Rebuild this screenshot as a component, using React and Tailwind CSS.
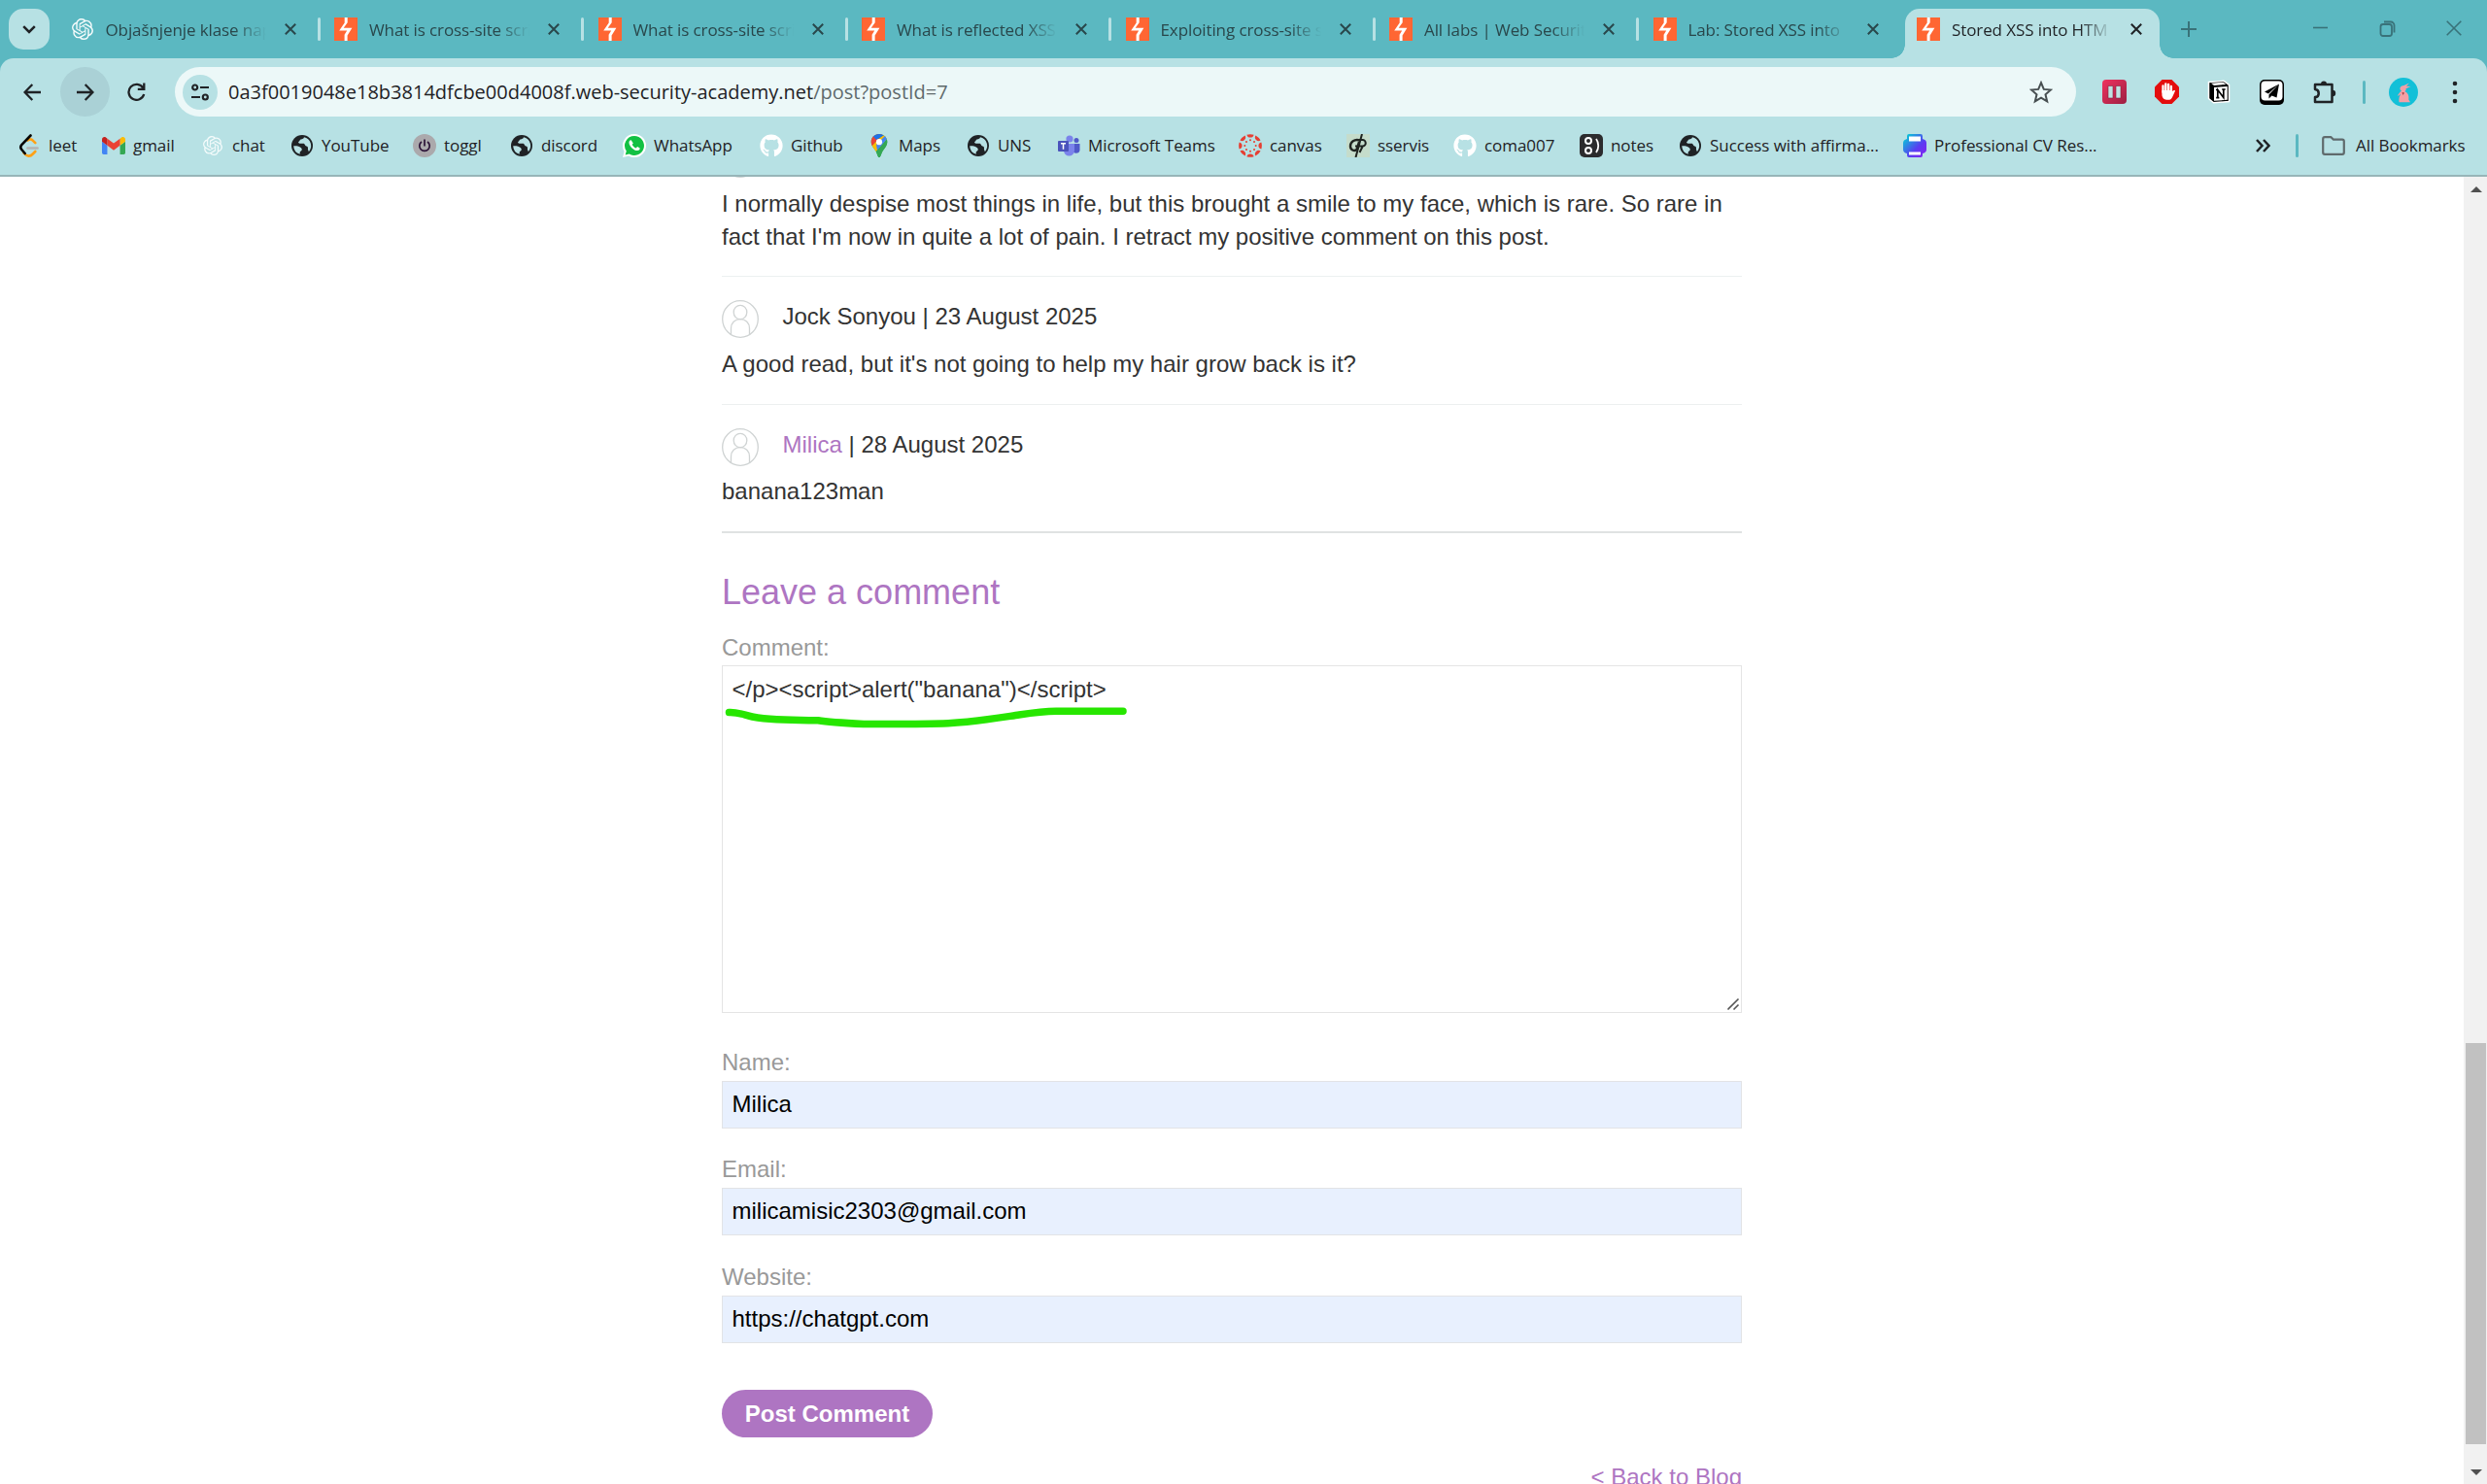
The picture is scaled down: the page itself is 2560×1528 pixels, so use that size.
import React from "react";
import { SiOpenai } from "react-icons/si";
import { FaGithub } from "react-icons/fa";

function Bolt() {
  return (
    <svg viewBox="0 0 24 24" className="h-6 w-6 shrink-0">
      <rect width="24" height="24" fill="#ff6633" />
      <path d="M10.700 0h3v5.200L9.700 10.800h8.700l-4.800 7.700V24h-3v-6.200l2.600-4.300H5.200l5.500-8.100z" fill="#fff" />
    </svg>
  );
}

function Globe() {
  return (
    <svg viewBox="0 0 24 24" className="h-6 w-6">
      <circle cx="12" cy="12" r="11" fill="#1f2225" />
      <path d="M3.200 12.200c3.200-.2 6.400.3 8 2.200 1.200 1.500.3 2.600-.8 3.300-1 .6-.6 1.700-.7 3A9.200 9.200 0 0 1 3.200 12.200z" fill="#b7e1e4" />
      <path d="M14 3.200c-.2 1.600-1.700 2-3.200 2.200-1.400.2-1 1.800-2.200 2.400-1 .6-.3 2 1 2h3.600c1.800 0 1.600 2.600 3.200 2.800 1.600.2 1.800 1.600 1.500 3.200l1 2.400A9.200 9.200 0 0 0 14 3.200z" fill="#b7e1e4" />
    </svg>
  );
}

const icons = {
  leet: (
    <svg viewBox="0 0 24 24" className="h-6 w-6" fill="none" strokeLinecap="round" strokeWidth="2.600">
      <path d="M10.500 14.500h10" stroke="#b3b3b3" />
      <path d="M10.500 6.500c2-1.800 4-1.300 5.800.6l2 2M6.500 19.500c3.500 3.900 6.500 4 9.300 1l2.500-2.500" stroke="#ffa116" />
      <path d="M13.500 1.500L4.500 10.900c-1.500 1.600-1.500 3.600-.2 5.100L7.700 20" stroke="#070706" />
    </svg>
  ),
  gmail: (
    <svg viewBox="52 42 88 66" className="h-6 w-6">
      <path fill="#4285f4" d="M58 108h14V74L52 59v43c0 3.320 2.690 6 6 6" />
      <path fill="#34a853" d="M120 108h14c3.320 0 6-2.690 6-6V59l-20 15" />
      <path fill="#fbbc04" d="M120 48v26l20-15v-8c0-7.420-8.470-11.650-14.400-7.200" />
      <path fill="#ea4335" d="M72 74V48l24 18 24-18v26L96 92" />
      <path fill="#c5221f" d="M52 51v8l20 15V48l-5.600-4.200c-5.940-4.450-14.400-.22-14.400 7.200" />
    </svg>
  ),
  chat: <SiOpenai className="h-5 w-6 text-[#f4fbfb]" />,
  globe: <Globe />,
  toggl: (
    <svg viewBox="0 0 24 24" className="h-6 w-6" fill="none">
      <circle cx="12" cy="12" r="12" fill="#aba9ac" />
      <path d="M12 5.500v7M9 8a5.200 5.200 0 1 0 6 0" stroke="#2c1338" strokeWidth="1.700" />
    </svg>
  ),
  whatsapp: (
    <svg viewBox="0 0 24 24" className="h-6 w-6">
      <path d="M12 0a12 12 0 0 1 0 24c-2 0-4-.5-5.800-1.500L0 24l1.600-6A12 12 0 0 1 12 0z" fill="#fff" />
      <path d="M12 2a10 10 0 1 1-5.300 18.500L2.700 21.500l1.100-3.900A10 10 0 0 1 12 2z" fill="#12c143" />
      <path d="M8.800 6.500c-.8-.6-2.400.7-2.300 2.400.2 3.600 5 8.200 8.600 8.200 1.700 0 3-1.500 2.500-2.500l-2.500-1.500-1.400 1.500c-1.800-.7-3.200-2-4-3.800l1.100-1.300z" fill="#fff" />
    </svg>
  ),
  github: <FaGithub className="h-6 w-6 text-white" />,
  maps: (
    <svg viewBox="0 0 24 24" className="h-6 w-6">
      <clipPath id="pin">
        <path d="M12 0c4.700 0 8.300 3.600 8.300 8.200 0 3.300-1.900 5.600-4 8.200C14.300 19 13.500 24 12 24s-2.200-5-4.300-7.600c-2-2.600-4-4.900-4-8.200C3.700 3.600 7.300 0 12 0z" />
      </clipPath>
      <g clipPath="url(#pin)">
        <rect width="24" height="24" fill="#34a853" />
        <path d="M0 16L17 0h7L8 19z" fill="#fbbc04" />
        <path d="M0 0h16L3 14z" fill="#ea4335" />
        <path d="M6 2.500L9 6 19 0H8z" fill="#1a73e8" />
        <path d="M9 11L20 0v5L10 17z" fill="#4285f4" />
        <path d="M8 19L21 5v19H8z" fill="#34a853" />
      </g>
      <circle cx="12" cy="8.200" r="3.100" fill="#fff" />
    </svg>
  ),
  teams: (
    <svg viewBox="0 0 24 24" className="h-6 w-6">
      <circle cx="20" cy="6.500" r="2.500" fill="#5059c9" />
      <circle cx="13" cy="5" r="3.600" fill="#7b83eb" />
      <path d="M16 10h7.500v6.500a3.800 3.800 0 0 1-7.500 0z" fill="#5059c9" />
      <path d="M7 10h11v7a5.500 5.500 0 0 1-11 0z" fill="#7b83eb" />
      <rect x="1" y="7" width="11" height="11" rx="1" fill="#4b53bc" />
      <path d="M4 9.800h5M6.500 9.800v6" stroke="#fff" strokeWidth="1.500" />
    </svg>
  ),
  canvas: (
    <svg viewBox="-12 -12 24 24" className="h-6 w-6" fill="#e63f33">
      {[0, 45, 90, 135, 180, 225, 270, 315].map((a) => (
        <g key={a} transform={`rotate(${a})`}>
          <path d="M-3.600-11.300a12 12 0 0 1 7.200 0a3.700 3.700 0 0 1-7.200 0z" />
          <circle cx="0" cy="-5.700" r="1" />
        </g>
      ))}
    </svg>
  ),
  sservis: (
    <svg viewBox="0 0 24 24" className="h-6 w-6" fill="none" stroke="#1f2420">
      <rect width="24" height="24" fill="#c5dccb" stroke="none" />
      <path d="M14 6.500C8 4.500 4 8.500 4 12.500s4 5.500 6.500 3.500L13 8" strokeWidth="2.400" />
      <path d="M13 6h3.500a3 3 0 0 1 0 6.500H9M16 0L9.500 24M17 12l-3.500 7" strokeWidth="2" />
    </svg>
  ),
  notes: (
    <svg viewBox="0 0 24 24" className="h-6 w-6" fill="none" stroke="#fff">
      <rect width="24" height="24" rx="5" fill="#2b2b2d" stroke="none" />
      <circle cx="9" cy="7" r="3" strokeWidth="2" />
      <circle cx="9" cy="17" r="3" strokeWidth="2" />
      <path d="M17 5c3 4 3 10 0 14" strokeWidth="1.800" />
    </svg>
  ),
  printer: (
    <svg viewBox="0 0 24 24" className="h-6 w-6">
      <linearGradient id="cv" x1="0" y1="0" x2="1" y2="1">
        <stop offset="0.100" stopColor="#08c5d8" />
        <stop offset="0.600" stopColor="#5a3df2" />
        <stop offset="1" stopColor="#8a1df0" />
      </linearGradient>
      <path d="M6 0h12q2 0 2 2v3q4 1 4 4v7q0 3-4 4v2q0 2-2 2H6q-2 0-2-2v-2q-4-1-4-4V9q0-3 4-4V2q0-2 2-2z" fill="url(#cv)" />
      <path d="M6 2.500h12v5H6zM6 18.500h12v3H6z" fill="#fff" />
    </svg>
  ),
};

const tabs = [
  ["Objašnjenje klase nap", true],
  ["What is cross-site scri"],
  ["What is cross-site scri"],
  ["What is reflected XSS"],
  ["Exploiting cross-site s"],
  ["All labs | Web Securit"],
  ["Lab: Stored XSS into"],
];

const bookmarks = [
  ["leet", "leet", "w-[87px]"],
  ["gmail", "gmail", "w-[102px]"],
  ["chat", "chat", "w-[92px]"],
  ["globe", "YouTube", "w-[126px]"],
  ["toggl", "toggl", "w-[100px]"],
  ["globe", "discord", "w-[116px]"],
  ["whatsapp", "WhatsApp", "w-[141px]"],
  ["github", "Github", "w-[111px]"],
  ["maps", "Maps", "w-[102px]"],
  ["globe", "UNS", "w-[93px]"],
  ["teams", "Microsoft Teams", "w-[187px]"],
  ["canvas", "canvas", "w-[111px]"],
  ["sservis", "sservis", "w-[110px]"],
  ["github", "coma007", "w-[130px]"],
  ["notes", "notes", "w-[102px]"],
  ["globe", "Success with affirma...", "w-[231px]"],
  ["printer", "Professional CV Res...", "w-[240px]"],
];

function Close() {
  return (
    <svg viewBox="0 0 12 12" className="h-3 w-3 shrink-0" fill="none" stroke="currentColor" strokeWidth="2">
      <path d="M.8.8l10.400 10.400M11.200.8L.8 11.200" />
    </svg>
  );
}

function TabTitle({ children }) {
  return (
    <span className="mt-[2px] ml-3 w-[165px] overflow-hidden text-[17px] leading-6 tracking-[-0.100px] whitespace-nowrap [mask-image:linear-gradient(to_right,black_80%,transparent)]">
      {children}
    </span>
  );
}

function TabStrip() {
  return (
    <div className="flex h-[60px] bg-[#5bb8c1] pt-[9px] text-[#29474b]">
      <button className="ml-[9px] flex h-[42px] w-[42px] items-center justify-center rounded-[15px] bg-[#b7e1e4] text-[#1f2225]">
        <svg viewBox="0 0 14 9" className="h-[9px] w-[14px]" fill="none" stroke="currentColor" strokeWidth="2.500">
          <path d="M1.200 1.200L7 7l5.800-5.800" />
        </svg>
      </button>
      <div className="ml-[9.500px] flex">
        {tabs.map(([title, ai], i) => (
          <div key={i} className="flex h-[42px] w-[271.500px] shrink-0 items-center pl-3">
            {ai ? <SiOpenai className="h-[22px] w-6 shrink-0 text-[#f4fbfb]" /> : <Bolt />}
            <TabTitle>{title}</TabTitle>
            <span className="ml-[19px]"><Close /></span>
            <span className={i === 6 ? "hidden" : "ml-[22px] h-6 w-[3px] rounded-sm bg-[#b7e1e4]"} />
          </div>
        ))}
        <div className="relative flex h-[51px] w-[262px] items-center rounded-t-[15px] bg-[#b7e1e4] pb-[9px] pl-3 text-[#1f2225]">
          <span className="absolute bottom-0 -left-[14px] h-[14px] w-[14px] bg-[radial-gradient(circle_at_0_0,#5bb8c1_13.500px,#b7e1e4_14px)]" />
          <span className="absolute -right-[14px] bottom-0 h-[14px] w-[14px] bg-[radial-gradient(circle_at_100%_0,#5bb8c1_13.500px,#b7e1e4_14px)]" />
          <Bolt />
          <TabTitle>Stored XSS into HTM</TabTitle>
          <span className="ml-[19px]"><Close /></span>
        </div>
      </div>
      <svg viewBox="0 0 16 16" className="mt-[13px] ml-[22px] h-4 w-4" stroke="#397279" strokeWidth="2">
        <path d="M8 0v16M0 8h16" />
      </svg>
      <div className="mt-[11px] ml-[119px] flex h-[18px] items-center text-[#397279]">
        <svg viewBox="0 0 16 16" className="h-4 w-4" stroke="currentColor" strokeWidth="1.600"><path d="M1 7.500h15" /></svg>
        <svg viewBox="0 0 17 17" className="ml-[53px] h-[17px] w-[17px]" fill="none" stroke="currentColor" strokeWidth="1.800">
          <rect x="1.500" y="4" width="11.500" height="12" rx="2.500" />
          <path d="M5 1.500h7a3.500 3.500 0 0 1 3.500 3.500v7.500" />
        </svg>
        <svg viewBox="0 0 16 16" className="ml-[52px] h-4 w-4" stroke="currentColor" strokeWidth="1.600"><path d="M.7.7l14.600 14.600M15.300.7L.7 15.300" /></svg>
      </div>
    </div>
  );
}

function Extensions() {
  return (
    <div className="ml-[27px] flex shrink-0 items-center">
      <svg viewBox="0 0 25 25" className="h-[25px] w-[25px]">
        <linearGradient id="pk" x1="0" y1="0" x2="1" y2="1"><stop stopColor="#f0325f" /><stop offset="1" stopColor="#9c1f42" /></linearGradient>
        <rect width="25" height="25" rx="4" fill="url(#pk)" />
        <path d="M6 6.500h5v12.500H6zM14 6.500h5v12.500h-5z" fill="#bfe3e2" stroke="#8a1c3a" strokeWidth=".6" />
      </svg>
      <svg viewBox="0 0 25 25" className="ml-[29px] h-[25px] w-[25px]">
        <path d="M7.500 0h10L25 7.500v10L17.500 25h-10L0 17.500v-10z" fill="#e40d0d" />
        <path d="M8.500 13V6.500M11.300 12V4.500M14.100 12V5M16.900 13V7" stroke="#fff" strokeWidth="2.300" strokeLinecap="round" />
        <path d="M7.400 11h10.700v1l2-1.200 1 .7-3 6.500c-1 2-2 2.800-4.500 2.800-4 0-6.200-1.800-6.200-5.800z" fill="#fff" />
      </svg>
      <svg viewBox="0 0 24 24" className="ml-[29px] h-[25px] w-6">
        <path d="M1.500 2L17 .8l5.500 4V22L6.500 23.300 1.500 19z" fill="#000" stroke="#fff" strokeWidth="1.500" />
        <path d="M7 7.500L20.700 6.500v13.800l-13.700 1z" fill="#fff" />
        <path d="M4 3.200L16.500 2.200l2.700 2.200L7 5.400z" fill="#fff" />
        <path d="M10.800 18V10l6 8V9.500M9 10h2.700M15.200 9.500h3.500M9.200 18.200h3.200" fill="none" stroke="#000" strokeWidth="1.700" />
      </svg>
      <svg viewBox="0 0 25 26" className="ml-[30px] h-[26px] w-[25px]">
        <rect width="25" height="26" rx="5" fill="#000" />
        <rect x="1.500" y="1.500" width="22" height="20" rx="4" fill="#fff" />
        <path d="M20 4.500L5 12.500l4 2zM20 4.500L9.500 15.500v4l3-3 5 2z" fill="#000" />
      </svg>
      <svg viewBox="0 0 26 26" className="ml-[29px] h-[26px] w-[26px]">
        <path d="M3 5h17.500v18H3v-4.900c5-.5 5-7.400 0-8z" fill="none" stroke="#1f2225" strokeWidth="2.500" strokeLinejoin="round" />
        <path d="M9 4.500a3 3 0 0 1 6 0zM21 10.800a3.200 3.200 0 0 1 0 6.400z" fill="#1f2225" />
      </svg>
      <span className="ml-[26px] h-6 w-[2.500px] rounded bg-[#5bb8c1]" />
      <svg viewBox="0 0 30 30" className="ml-[24.500px] h-[30px] w-[30px]">
        <circle cx="15" cy="15" r="15" fill="#12c0d8" />
        <path d="M11.500 10.500c1-1.800 2.500-2.500 4-2.500l5.500-2.500-3 3.300 4.500.2-5 2.200c.5 1.300-.2 2.300-1.200 2.800 3.500 1.500 4.700 5 4 8.500l1.700 2.700H10.500c-.5-4 .3-6.500 2-8.500l-3.500 2.300c.5-2 2-4 4-5.300-1-.7-1.700-1.700-1.500-3.200z" fill="#f2a0a6" />
        <path d="M13.500 15l2.500.5-1.500 2.500z" fill="#a33c3c" />
      </svg>
      <svg viewBox="0 0 6 24" className="ml-[35px] h-6 w-[6px]" fill="#1f2225">
        <circle cx="3" cy="3" r="2.300" /><circle cx="3" cy="12" r="2.300" /><circle cx="3" cy="21" r="2.300" />
      </svg>
    </div>
  );
}

function Toolbar() {
  return (
    <div className="flex h-[69px] items-center pt-[9px] pb-[9px] text-[#1f2225]">
      <svg viewBox="0 0 18 18" className="ml-6 h-[18px] w-[18px]" fill="none" stroke="currentColor" strokeWidth="2.300">
        <path d="M18 9H1.500M9.300 1L1.500 9l7.800 8" />
      </svg>
      <span className="ml-5 flex h-[51px] w-[51px] items-center justify-center rounded-full bg-[#aad1d6]">
        <svg viewBox="0 0 18 18" className="h-[18px] w-[18px]" fill="none" stroke="currentColor" strokeWidth="2.300">
          <path d="M0 9h16.500M8.700 1l7.800 8-7.800 8" />
        </svg>
      </span>
      <svg viewBox="0 0 19 19" className="ml-[18px] h-[19px] w-[19px]" fill="none" stroke="currentColor" strokeWidth="2.300">
        <path d="M16.300 5.600A8 8 0 1 0 17.200 12M17.300.5v6.300h-6.500" />
      </svg>
      <div className="ml-[30px] flex h-[51px] w-[1957px] shrink-0 items-center rounded-full bg-[#ecf8f8] pl-2">
        <span className="flex h-[36px] w-[36px] items-center justify-center rounded-full bg-[#b7e1e4]">
          <svg viewBox="0 0 18 18" className="h-[18px] w-[18px]" fill="none" stroke="currentColor" strokeWidth="2.200">
            <circle cx="3.700" cy="4" r="2.500" /><path d="M9 4h9M0 14h9" /><circle cx="14.300" cy="14" r="2.500" />
          </svg>
        </span>
        <span className="ml-[11px] flex-1 text-[20px] leading-7 whitespace-nowrap">
          0a3f0019048e18b3814dfcbe00d4008f.web-security-academy.net<span className="text-[#5f6a6c]">/post?postId=7</span>
        </span>
        <svg viewBox="0 0 24 24" className="mr-[24px] h-6 w-6" fill="none" stroke="#474f51" strokeWidth="2">
          <path d="M12 2.200l2.800 6.700 7.200.6-5.500 4.800 1.700 7.100-6.200-3.800-6.200 3.800 1.700-7.100L2 9.500l7.200-.6z" />
        </svg>
      </div>
      <Extensions />
    </div>
  );
}

function Bookmarks() {
  return (
    <div className="flex h-[51px] items-center pb-[9px] pl-[18px] text-[17px] leading-6 tracking-[-0.060px] whitespace-nowrap text-[#1f2225]">
      {bookmarks.map(([icon, label, width], i) => (
        <div key={i} className={`flex shrink-0 items-center ${width}`}>
          <span className="mr-[8px] w-6 shrink-0">{icons[icon]}</span>
          {label}
        </div>
      ))}
      <div className="ml-[123px] flex items-center">
        <svg viewBox="0 0 15 14" className="h-[14px] w-[15px]" fill="none" stroke="currentColor" strokeWidth="2.500">
          <path d="M1 1l5.500 6L1 13M8 1l5.500 6L8 13" />
        </svg>
        <span className="ml-[26px] h-6 w-[3px] rounded bg-[#5bb8c1]" />
        <svg viewBox="0 0 24 20" className="ml-[24px] h-5 w-6" fill="none" stroke="#5f6a6c" strokeWidth="2.200" strokeLinejoin="round">
          <path d="M1.200 3q0-1.800 1.800-1.800h6.500l2.500 2.500h9q1.800 0 1.800 1.800V17q0 1.800-1.800 1.800H3q-1.800 0-1.800-1.800z" />
        </svg>
        <span className="ml-[11px]">All Bookmarks</span>
      </div>
    </div>
  );
}

function Avatar() {
  return (
    <svg viewBox="0 0 38 39" className="h-[39px] w-[38px] shrink-0" fill="none" stroke="#cfd3d3" strokeWidth="1.300">
      <ellipse cx="19" cy="19.500" rx="18.300" ry="18.800" />
      <ellipse cx="19" cy="12.500" rx="6.800" ry="7.200" />
      <path d="M9.500 35.500V29c0-5.500 4-9.300 9.500-9.300s9.500 3.800 9.500 9.300v6.500" />
    </svg>
  );
}

function Field({ label, value, className }) {
  return (
    <label className={`block ${className}`}>
      <span className="block h-[34px] text-[#999]">{label}</span>
      <span className="mt-[2px] block h-[49px] border border-[#e2e3e6] bg-[#e8f0fe] pt-[6px] pl-[9.500px] text-black">{value}</span>
    </label>
  );
}

function Page() {
  return (
    <main className="flex h-[1346px] overflow-hidden bg-white">
      <div className="flex-1 overflow-hidden">
        <div className="ml-[743px] w-[1050px] font-['Liberation_Sans',Arial,sans-serif] text-[24px] leading-[34px] text-[#333]">
          <div className="-mt-[38px] h-[39px]"><Avatar /></div>
          <p className="mt-[10px] h-[92px] border-b border-[#ecf0f0]">
            I normally despise most things in life, but this brought a smile to my face, which is rare. So rare in fact that I'm now in quite a lot of pain. I retract my positive comment on this post.
          </p>
          <section className="h-[132px] border-b border-[#ecf0f0] pt-6">
            <div className="flex h-[39px]"><Avatar /><span className="ml-[24.500px]">Jock Sonyou | 23 August 2025</span></div>
            <p className="mt-[10px]">A good read, but it's not going to help my hair grow back is it?</p>
          </section>
          <section className="h-[132px] border-b-2 border-[#e0e2e2] pt-6">
            <div className="flex h-[39px]"><Avatar /><span className="ml-[24.500px]"><span className="text-[#ae75c2]">Milica</span> | 28 August 2025</span></div>
            <p className="mt-[9px]">banana123man</p>
          </section>
          <h1 className="mt-[40px] h-[61px] text-[36px] leading-[42px] text-[#ae75c2]">Leave a comment</h1>
          <div className="h-[34px] text-[#999]">Comment:</div>
          <div className="relative mt-px h-[358px] border border-[#e4e4e4] pt-[7px] pl-[9.500px]">
            {'</p><script>alert("banana")</script>'}
            <svg viewBox="0 0 420 30" className="absolute top-[40px] left-[1px] h-[30px] w-[420px]" fill="none" stroke="#27e600" strokeWidth="7.500" strokeLinecap="round" strokeLinejoin="round">
              <path d="M5.500 7.500C17 7 23 11.500 35 13C52 15 78 15.700 97 15.700C108 17.500 125 18.500 144 19.500C175 19.500 205 19.800 231 18.700C262 17 290 12 304 10C320 7.500 330 6.200 342 6.200H411" />
            </svg>
            <svg viewBox="0 0 14 14" className="absolute right-[1px] bottom-[1px] h-[14px] w-[14px]" stroke="#555" strokeWidth="1.600">
              <path d="M1.500 12.500L12.500 1.500M7.500 12.500L12.500 7.500" />
            </svg>
          </div>
          <Field className="mt-[34px]" label="Name:" value="Milica" />
          <Field className="mt-[25px]" label="Email:" value="milicamisic2303@gmail.com" />
          <Field className="mt-[26px]" label="Website:" value="https://chatgpt.com" />
          <button className="mt-[48px] block h-[49px] w-[217px] rounded-full bg-[#ae75c2] text-center leading-[49px] font-bold whitespace-nowrap text-white">
            Post Comment
          </button>
          <div className="mt-[24px] text-right text-[#ae75c2]">&lt; Back to Blog</div>
        </div>
      </div>
      <div className="flex w-6 flex-col items-center bg-[#f1f1f1]">
        <svg viewBox="0 0 12 6" className="mt-[10px] ml-px h-[6px] w-3"><path d="M0 6l6-6 6 6z" fill="#505050" /></svg>
        <div className="mt-[876px] h-[413px] w-[21px] bg-[#c1c1c1]" />
        <svg viewBox="0 0 12 6" className="mt-[26px] ml-px h-[6px] w-3"><path d="M0 0l6 6 6-6z" fill="#505050" /></svg>
      </div>
    </main>
  );
}

export default function App() {
  return (
    <div className="h-[1528px] w-[2560px] overflow-hidden bg-white font-['Open_Sans','Noto_Sans',sans-serif]">
      <TabStrip />
      <div className="bg-[#5bb8c1]">
        <header className="h-[122px] rounded-t-[14px] border-b-2 border-[#97b5b8] bg-[#b7e1e4]">
          <Toolbar />
          <Bookmarks />
        </header>
      </div>
      <Page />
    </div>
  );
}
